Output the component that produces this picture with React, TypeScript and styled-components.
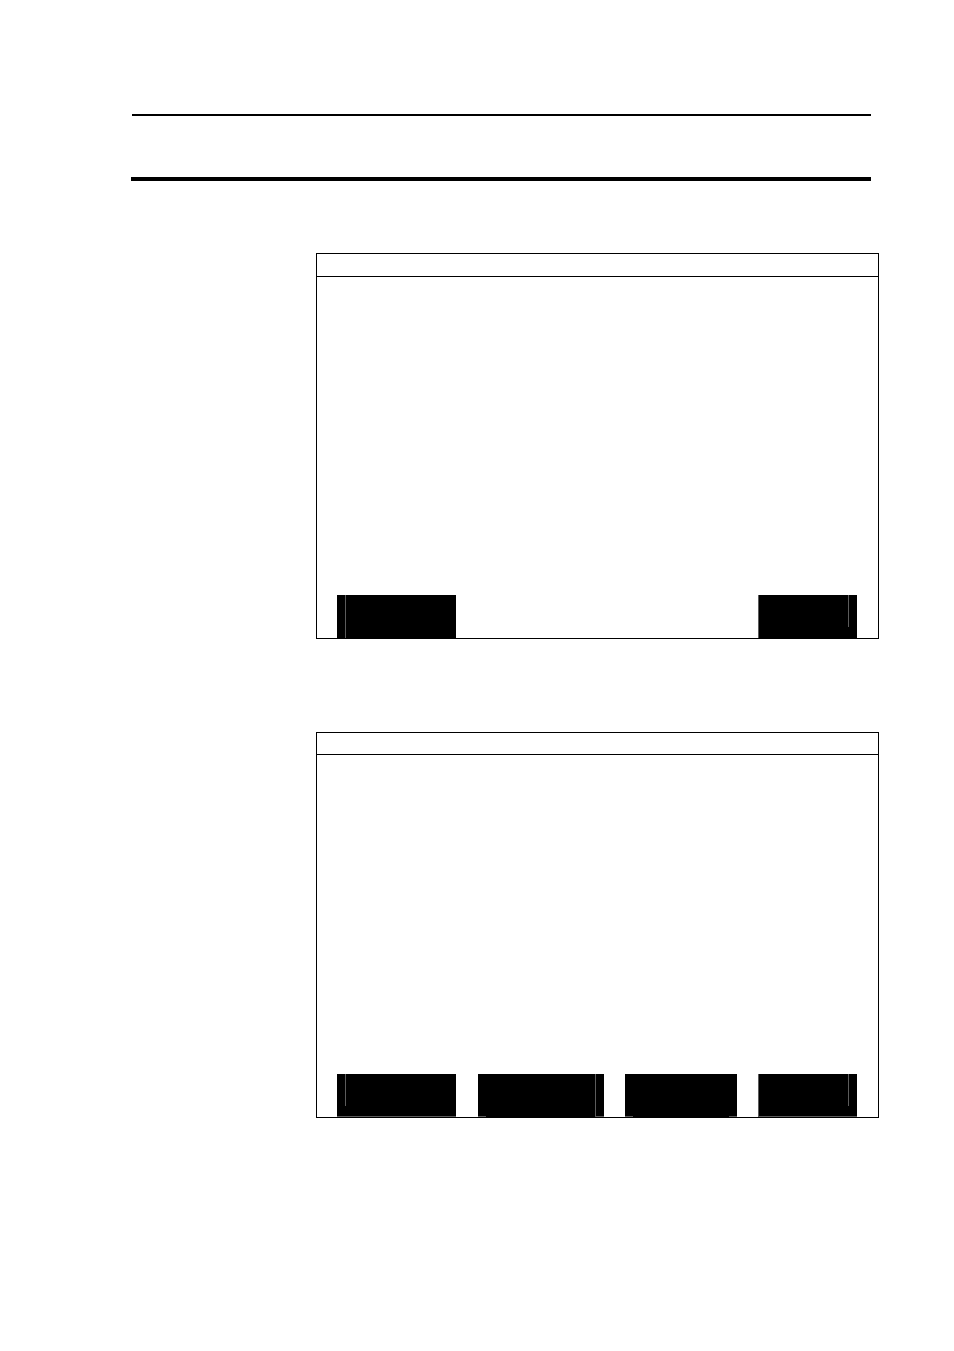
import React from "react";
import styled, { createGlobalStyle } from "styled-components";

const GlobalStyle = createGlobalStyle`
  *, *::before, *::after { box-sizing: border-box; }
  body {
    margin: 0;
    background: #fff;
    color: #000;
    font-family: "Liberation Sans", Arial, sans-serif;
  }
`;

const seam = "#5c5c5c";

const Page = styled.main`
  min-height: 100vh;
  padding: 114px 75px 0 131px;
`;

const Masthead = styled.header`
  height: 67px;
  margin-right: 8px;
  border-bottom: 4px solid #000;
`;

const TopRule = styled.hr`
  height: 2px;
  margin: 0 0 0 1px;
  border: 0;
  background: #000;
`;

const Screens = styled.div`
  display: flex;
  flex-direction: column;
  gap: 93px;
  margin: 72px 0 0 185px;
`;

const Screen = styled.section`
  display: flex;
  flex-direction: column;
  min-height: 386px;
  border: 1px solid #000;
`;

const TitleBar = styled.div<{ $height: number }>`
  height: ${(p) => p.$height}px;
  border-bottom: 1px solid #000;
`;

const Content = styled.div`
  flex: 1;
`;

const SoftKeys = styled.div`
  display: grid;
  grid-template-columns: 119fr 22px 126fr 21px 112fr 21px 99fr;
  height: 43px;
  padding: 0 21px 0 20px;
`;

const SoftKey = styled.button<{ $slot: number }>`
  grid-column: ${(p) => p.$slot * 2 - 1};
  grid-row: 1;
  display: flex;
  align-items: stretch;
  padding: 0;
  border: 0;
  border-radius: 0;
  background: #000;
`;

const Face = styled.span`
  flex: 1;
`;

const Edge = styled.span<{ $width: number; $base?: boolean }>`
  width: ${(p) => p.$width}px;
  border-bottom: ${(p) => (p.$base ? `1px solid ${seam}` : "0")};
`;

const Seam = styled.span<{ $short?: boolean }>`
  width: 1px;
  height: ${(p) => (p.$short ? "32px" : "auto")};
  background: ${seam};
`;

const BasedKey = styled(SoftKey)`
  border-bottom: 1px solid ${seam};
`;

export default function App() {
  return (
    <>
      <GlobalStyle />
      <Page>
        <Masthead>
          <TopRule />
        </Masthead>
        <Screens>
          <Screen>
            <TitleBar $height={23} />
            <Content />
            <SoftKeys>
              <SoftKey type="button" $slot={1}>
                <Edge $width={8} />
                <Seam />
                <Face />
              </SoftKey>
              <SoftKey type="button" $slot={4}>
                <Seam />
                <Face />
                <Seam $short />
                <Edge $width={8} />
              </SoftKey>
            </SoftKeys>
          </Screen>
          <Screen>
            <TitleBar $height={22} />
            <Content />
            <SoftKeys>
              <BasedKey type="button" $slot={1}>
                <Edge $width={8} />
                <Seam $short />
                <Face />
              </BasedKey>
              <SoftKey type="button" $slot={2}>
                <Edge $width={8} $base />
                <Face />
                <Seam />
                <Edge $width={8} $base />
              </SoftKey>
              <SoftKey type="button" $slot={3}>
                <Edge $width={8} $base />
                <Face />
                <Edge $width={8} $base />
              </SoftKey>
              <BasedKey type="button" $slot={4}>
                <Seam />
                <Face />
                <Seam $short />
                <Edge $width={8} />
              </BasedKey>
            </SoftKeys>
          </Screen>
        </Screens>
      </Page>
    </>
  );
}
